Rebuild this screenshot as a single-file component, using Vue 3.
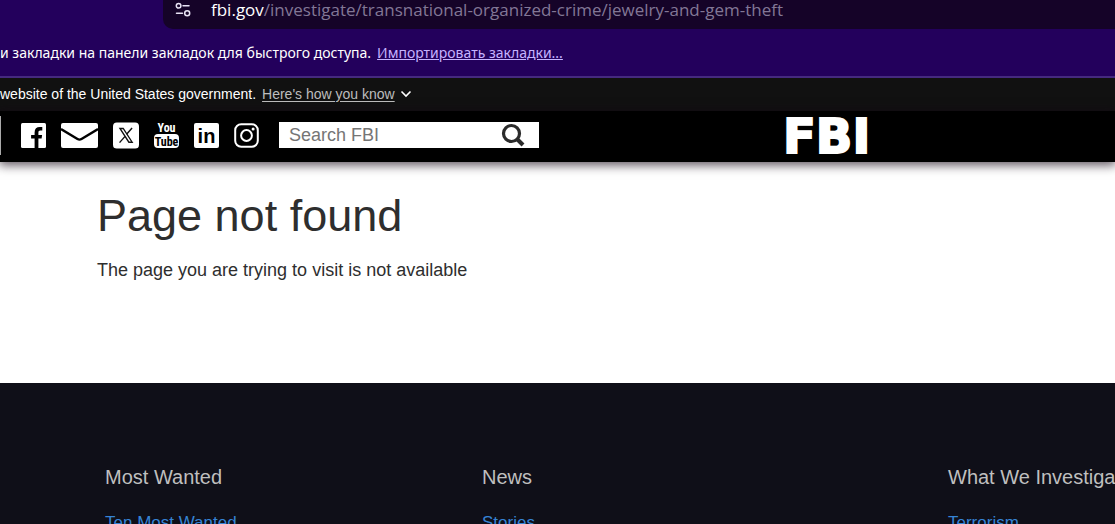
<script setup>
const columns = [
  { title: 'Most Wanted', link: 'Ten Most Wanted' },
  { title: 'News', link: 'Stories' },
  { title: 'What We Investigate', link: 'Terrorism' },
]
</script>

<template>
  <div class="page">
    <div class="browser">
      <div class="address">
        <button class="site-info" type="button" aria-label="Site information">
          <svg width="16" height="16" viewBox="0 0 16 16" fill="none" stroke="#e9e3f5" stroke-width="1.5">
            <circle cx="3.6" cy="3.8" r="2.3" />
            <path d="M8 3.8h6M1.5 11.2h6" stroke-linecap="round" />
            <circle cx="12.2" cy="11.2" r="2.5" />
          </svg>
        </button>
        <span class="url"><span class="host">fbi.gov</span>/investigate/transnational-organized-crime/jewelry-and-gem-theft</span>
      </div>
      <div class="bookmarks" lang="ru">
        <span>и закладки на панели закладок для быстрого доступа.</span>
        <a href="#">Импортировать закладки...</a>
      </div>
    </div>

    <div class="banner">
      <span>website of the United States government.</span>
      <button type="button" class="know">
        <span>Here's how you know</span>
        <svg width="12" height="8" viewBox="0 0 12 8" fill="none" stroke="#fff" stroke-width="1.6">
          <path d="M1.5 1.5 6 6l4.500-4.500" />
        </svg>
      </button>
    </div>

    <header class="header">
      <nav class="social" aria-label="Social media">
        <a href="#" aria-label="Facebook">
          <svg width="25" height="25" viewBox="0 0 25 25">
            <rect width="25" height="25" rx="1.500" fill="#fff" />
            <path d="M13.600 25v-9.400h-3.500v-3.700h3.500V9.500c0-3.600 2-5.400 5.200-5.400h2.500v3.500h-1.900c-1.500 0-2 .7-2 2v2.300h3.700l-.5 3.700h-3.200V25z" fill="#000" />
          </svg>
        </a>
        <a href="#" aria-label="Email">
          <svg width="37" height="25" viewBox="0 0 37 25">
            <rect width="37" height="25" rx="2" fill="#fff" />
            <path d="M0 6 16.500 16q2 1.200 4 0L37 6" fill="none" stroke="#000" stroke-width="2.400" />
          </svg>
        </a>
        <a href="#" aria-label="X">
          <svg width="26" height="27" viewBox="0 0 27 27">
            <rect width="27" height="27" rx="4" fill="#fff" />
            <path d="M7.200 6.200h3.400l9.300 14.300h-3.400z" fill="#fff" stroke="#111" stroke-width="1.400" />
            <path d="m19.800 5.800-5.700 6.500M12.500 14.400l-5.700 6.500" stroke="#111" stroke-width="1.500" />
          </svg>
        </a>
        <a href="#" aria-label="YouTube">
          <svg class="tube" width="25" height="27" viewBox="0 0 25 27">
            <text x="12.500" y="10" text-anchor="middle" fill="#fff">You</text>
            <rect y="12" width="25" height="14" rx="4" fill="#fff" />
            <text x="12.500" y="23.500" text-anchor="middle" fill="#000">Tube</text>
          </svg>
        </a>
        <a href="#" aria-label="LinkedIn">
          <svg class="linked" width="25" height="25" viewBox="0 0 25 25">
            <rect width="25" height="25" rx="2" fill="#fff" />
            <text x="12.500" y="20" text-anchor="middle" fill="#000">in</text>
          </svg>
        </a>
        <a href="#" aria-label="Instagram">
          <svg width="25" height="25" viewBox="0 0 25 25" fill="none" stroke="#fff" stroke-width="2">
            <rect x="1.200" y="1.200" width="22.600" height="22.600" rx="6" />
            <circle cx="12.500" cy="12.500" r="5.400" />
            <circle cx="19.100" cy="5.900" r="1.500" fill="#fff" stroke="none" />
          </svg>
        </a>
      </nav>
      <form class="search" role="search" @submit.prevent>
        <input type="text" placeholder="Search FBI" aria-label="Search FBI" />
        <button type="submit" aria-label="Search">
          <svg width="24" height="24" viewBox="0 0 24 24" fill="none" stroke="#2b2b2b">
            <circle cx="10.500" cy="10.500" r="8" stroke-width="3.200" />
            <path d="m16.500 16.500 5.500 5.500" stroke-width="4" />
          </svg>
        </button>
      </form>
      <a href="#" class="wordmark">FBI</a>
    </header>

    <main class="content">
      <h1>Page not found</h1>
      <p>The page you are trying to visit is not available</p>
    </main>

    <footer class="footer">
      <section v-for="column in columns" :key="column.title">
        <h2>{{ column.title }}</h2>
        <a href="#">{{ column.link }}</a>
      </section>
    </footer>
  </div>
</template>

<style>
body {
  margin: 0;
}
</style>

<style scoped>
.page {
  display: flex;
  flex-direction: column;
  height: 100vh;
  overflow: hidden;
  background: #fff;
  color: #2e2e2e;
  font-family: "Liberation Sans", Arial, sans-serif;
  white-space: nowrap;
}
.page > * {
  flex-shrink: 0;
}
button {
  padding: 0;
  border: 0;
  background: none;
  font: inherit;
}
svg {
  display: block;
}
.browser {
  background: #23005c;
  border-bottom: 2px solid #45297f;
  font-family: "Noto Sans", "Open Sans", sans-serif;
}
.address {
  display: flex;
  align-items: center;
  gap: 20px;
  height: 20px;
  margin-left: 163px;
  padding: 0 12px 9px;
  border-bottom-left-radius: 10px;
  background: #150328;
}
.url {
  color: #827796;
  font-family: "Open Sans", "Noto Sans", sans-serif;
  font-size: 17px;
  line-height: 18px;
}
.host {
  color: #fff;
}
.bookmarks {
  display: flex;
  gap: 6px;
  padding: 14px 0;
  color: #fff;
  font-size: 14px;
  line-height: 19px;
}
.bookmarks a {
  color: #c6b3ff;
}
.banner {
  display: flex;
  align-items: center;
  gap: 6px;
  height: 33px;
  padding-bottom: 2px;
  box-sizing: border-box;
  background: #111;
  color: #fff;
  font-size: 14px;
}
.know {
  display: flex;
  align-items: center;
  gap: 5px;
  color: #bdbdbd;
}
.know span {
  text-decoration: underline;
  text-underline-offset: 2px;
}
.header {
  display: flex;
  align-items: center;
  height: 51px;
  background: #000;
  box-shadow: 0 2px 10px 1px rgba(20, 5, 20, 0.7);
}
.social {
  display: flex;
  align-items: center;
  gap: 15px;
  margin-bottom: 2px;
  padding: 6px 0 6px 20px;
  border-left: 1px solid #aaa;
}
.tube {
  font: bold 12px "Liberation Sans Narrow", "Roboto Condensed", "Liberation Sans", sans-serif;
}
.linked {
  font: bold 20px "Liberation Sans", sans-serif;
}
.search {
  display: flex;
  width: 260px;
  height: 26px;
  margin: 0 244px 3px 20px;
  background: #fff;
}
.search input {
  flex: 1;
  min-width: 0;
  padding: 0 10px;
  border: 0;
  background: none;
  color: #333;
  font: 18px "Liberation Sans", Arial, sans-serif;
}
.search input::placeholder {
  color: #757575;
}
.search button {
  padding: 1px 14px 1px 0;
}
.wordmark {
  color: #fff;
  font: bold 48px/51px "DejaVu Sans", sans-serif;
  -webkit-text-stroke: 2px #fff;
  text-decoration: none;
}
.content {
  height: 221px;
  padding-left: 97px;
  box-sizing: border-box;
}
h1 {
  margin: 28px 0 18px;
  font-size: 45px;
  font-weight: 400;
  line-height: 52px;
}
p {
  margin: 0;
  font-size: 18px;
  line-height: 20px;
}
.footer {
  display: grid;
  grid-template-columns: minmax(0, 377fr) minmax(0, 466fr) minmax(0, 167fr);
  padding: 82px 0 40px 105px;
  background: #0f0f18;
}
h2 {
  margin: 0 0 22px;
  color: #bfbfbf;
  font-size: 20px;
  font-weight: 400;
  line-height: 24px;
}
.footer a {
  color: #3684d6;
  font-size: 17px;
  line-height: 24px;
  text-decoration: none;
}
</style>
